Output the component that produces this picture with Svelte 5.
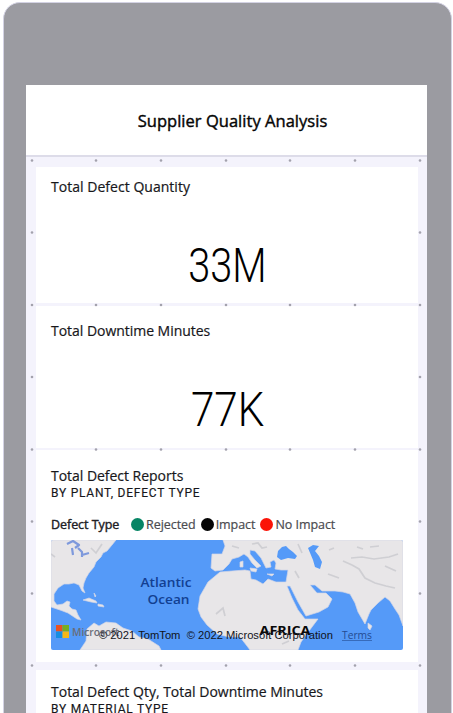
<script>
  const columns = [6, 70, 135, 200, 264, 329, 394];
  const rows = [5, 77, 149.5, 221.5, 294, 366, 438, 510];
  const dots = [];
  rows.forEach((y, r) => {
    columns.forEach((x, c) => {
      const edge = c === 0 || c === columns.length - 1;
      const gutter = r === 0 || r === 2 || r === 4 || r === 7;
      if (edge || gutter) dots.push({ x, y });
    });
  });
  const legend = [
    { label: 'Rejected', color: '#078565', gap: '5px' },
    { label: 'Impact', color: '#050505', gap: '5px' },
    { label: 'No Impact', color: '#fb1408', gap: '0' }
  ];
</script>

<div class="stage">
  <div class="phone">
    <div class="screen">
      <header><span class="title">Supplier Quality Analysis</span></header>
      <main>
        <section class="card first">
          <h2 class="t1">Total Defect Quantity</h2>
          <div class="value"><span class="v1">33M</span></div>
        </section>
        <section class="card second">
          <h2 class="t2">Total Downtime Minutes</h2>
          <div class="value"><span class="v2">77K</span></div>
        </section>
        <section class="card third">
          <h2 class="t3">Total Defect Reports</h2>
          <div class="sub">BY PLANT, DEFECT TYPE</div>
          <div class="legend">
            <b>Defect Type</b>
            {#each legend as item}
              <span class="item" style:margin-right={item.gap}>
                <i style:background={item.color}></i>{item.label}
              </span>
            {/each}
          </div>
          <svg class="map" viewBox="0 0 352 110" width="352" height="110">
            <rect width="352" height="110" fill="#559af8" />
            <g fill="#e8e6e8" stroke="#d3d6e6" stroke-width="0.7" stroke-linejoin="round">
              <path d="M0 0H65L61 5L56 11L52 13L50 17L45 22L43 27L38 33L35 38L33 43L32 48L34 53L31 51L28 45L23 43L18 44L13 44L7 48L3 54L3 61L6 65L12 64L16 61L19 62L18 66L21 69L25 70L27 75L30 80L26 79L17 73L9 70L0 67Z" />
              <path d="M32 60L38 58L45 61L46 63L40 62ZM47 64L52 65L53 67L47 66ZM43 53L45 56L44 57Z" />
              <path d="M29 110L35 101L36 89L43 83L48 86L55 82L65 83L72 88L81 91L88 97L97 99L108 106L110 110Z" />
              <path d="M172 0L174 6L171 14H161L160 28L164 31L172 30L178 24L181 19L188 17L193 14L197 17L201 23L206 28L210 26L204 20L199 14L199 10L204 11L210 18L215 28L220 27L219 22L223 20L225 23L224 29L230 30L237 30L235 42L225 42L217 39L212 44L205 40L200 39L199 31L194 30L181 31L169 32L163 37L157 42L149 56L147 69L150 77L156 85L166 94L178 97L189 97L196 106L199 110H247L250 102L258 91L267 79L254 79L247 70L241 58L236 46L239 46L247 62L255 76L268 72L277 67L281 59L275 53L266 53L259 45L264 45L271 51L284 51L292 52L299 54L304 63L307 72L314 84L318 74L320 70L327 63L334 57L339 61L344 69L348 75L352 86V0Z" />
              <path d="M317 83L321 86L319 90L317 88Z" />
              <path d="M199 28L206 29L205 32L200 31ZM216 34L223 34L221 36ZM189 22L192 21L192 27L189 27Z" />
            </g>
            <g fill="#559af8">
              <path d="M226 17L227 11L231 7L235 6L238 9L242 12L246 16L244 19L237 18L230 20Z" />
              <path d="M257 8L262 5L268 6L264 11L268 16L271 22L269 29L264 27L262 20Z" />
            </g>
            <g fill="none" stroke="#7e99dc" stroke-width="2.2" stroke-linejoin="round">
              <path d="M16 4L22 1L28 5L24 8M21 8L22 15M27 8L31 12L31 17M31 15L38 13" />
            </g>
            <g fill="none" stroke="#c4c4cb" stroke-width="1.7" opacity=".7">
              <path d="M292 21L301 25L308 29L314 38L324 43L335 46L344 48M300 18L311 17L323 19L338 17L347 14M278 10L283 8M306 7L312 9M319 7L328 6M201 4L207 3L211 8L216 7M0 14L4 17M40 8L45 13L51 4M165 74L172 68L174 76M244 31L248 38M181 6L188 8M222 90L230 91M231 104L238 101M334 26L345 31M277 34L288 38M247 4L251 13" />
            </g>
            <g class="ocean">
              <text x="89.5" y="46.5" textLength="51" lengthAdjust="spacingAndGlyphs">Atlantic</text>
              <text x="96.5" y="63.5" textLength="42" lengthAdjust="spacingAndGlyphs">Ocean</text>
            </g>
            <rect x="5" y="85" width="6.5" height="6.5" fill="#e85122" />
            <rect x="11.5" y="85" width="6.5" height="6.5" fill="#75af22" />
            <rect x="5" y="91.5" width="6.5" height="6.5" fill="#168de2" />
            <rect x="11.5" y="91.5" width="6.5" height="6.5" fill="#f4b717" />
            <text class="brand" x="21" y="96" textLength="47" lengthAdjust="spacingAndGlyphs">Microsoft</text>
            <text class="africa" x="208.5" y="95" textLength="51" lengthAdjust="spacingAndGlyphs">AFRICA</text>
            <text class="credit" x="48" y="99" textLength="234" lengthAdjust="spacingAndGlyphs" xml:space="preserve">© 2021 TomTom  © 2022 Microsoft Corporation</text>
            <text class="terms" x="291" y="99" textLength="30" lengthAdjust="spacingAndGlyphs">Terms</text>
            <path d="M291 100.5H321" stroke="#244b91" stroke-width=".6" />
          </svg>
        </section>
        <section class="card fourth">
          <h2 class="t4">Total Defect Qty, Total Downtime Minutes</h2>
          <div class="sub">BY MATERIAL TYPE</div>
        </section>
        <svg class="dots" width="401" height="558" aria-hidden="true">
          {#each dots as dot}
            <circle cx={dot.x} cy={dot.y + 0.5} r="1.3" />
          {/each}
        </svg>
      </main>
    </div>
  </div>
</div>

<style>
  :global(body) { background: #fff; overflow: hidden; }
  .stage {
    box-sizing: border-box;
    width: 453px;
    height: 713px;
    padding: 2px 1px 0 3px;
    overflow: hidden;
    font-family: "Open Sans", "Noto Sans", sans-serif;
    color: #17171b;
  }
  .phone {
    box-sizing: border-box;
    width: 449px;
    height: 740px;
    padding: 82px 0 0 22px;
    border: 1px solid #d3d2e3;
    border-radius: 17px 17px 0 0;
    background: #9b9ba1;
  }
  .screen { width: 401px; height: 640px; background: #fff; }
  header {
    height: 70px;
    display: flex;
    align-items: center;
    justify-content: center;
    padding-left: 12px;
    box-sizing: border-box;
  }
  main {
    position: relative;
    height: 558px;
    box-sizing: border-box;
    padding: 10px 9px 0 10px;
    background: #f4f3fc;
    border-top: 2px solid #dddce9;
    display: flex;
    flex-direction: column;
  }
  .card {
    flex: none;
    box-sizing: border-box;
    padding: 0 0 0 15px;
    background: #fff;
  }
  .first { height: 136px; padding-top: 9px; margin-bottom: 3px; }
  .second { height: 142px; padding-top: 14px; margin-bottom: 2px; }
  .third { height: 212px; padding-top: 15px; margin-bottom: 8px; }
  .fourth { height: 60px; padding-top: 11px; }
  h2 {
    margin: 0;
    height: 21px;
    line-height: 21px;
    font-size: 14px;
    font-weight: 400;
    letter-spacing: -.03px;
    white-space: nowrap;
    -webkit-text-stroke: .2px #17171b;
  }
  .title {
    font-size: 16.5px;
    color: #050505;
    letter-spacing: .03px;
    white-space: nowrap;
    -webkit-text-stroke: .4px #050505;
  }
  .t1 { letter-spacing: .03px; }
  .t4 { letter-spacing: 0; }
  .value {
    height: 70px;
    margin-top: 34px;
    padding-right: 14px;
    display: flex;
    justify-content: center;
    line-height: 70px;
    font-family: Roboto, sans-serif;
    font-size: 49px;
    font-weight: 300;
    color: #000;
  }
  .value span { display: inline-block; transform: scaleX(.81); }
  .value .v2 { transform: scaleX(.86); }
  .sub {
    height: 14px;
    line-height: 15px;
    font-family: Roboto, sans-serif;
    font-size: 12px;
    letter-spacing: .77px;
    white-space: nowrap;
    -webkit-text-stroke: .15px #17171b;
  }
  .legend {
    display: flex;
    align-items: center;
    height: 18px;
    margin-top: 15px;
    margin-bottom: 7px;
    font-size: 12.5px;
    letter-spacing: -.05px;
    white-space: nowrap;
    color: #4b4b50;
    -webkit-text-stroke: .2px #4b4b50;
  }
  .legend b { width: 80px; font-weight: 400; color: #202024; -webkit-text-stroke: .4px #202024; }
  .item { display: flex; align-items: center; }
  .item i { width: 13px; height: 13px; margin-right: 2px; border-radius: 50%; flex: none; }
  .map { display: block; border-radius: 2px; }
  .map text { font-family: "Open Sans", "Noto Sans", sans-serif; }
  .ocean text { font-size: 12.5px; font-weight: 600; fill: #123f91; }
  .map .brand { font-size: 11px; font-weight: 600; fill: #6a6d78; }
  .map .africa { font-size: 13px; font-weight: 700; fill: #090909; }
  .map .credit { font-family: "Liberation Sans", sans-serif; font-size: 11.5px; fill: #10131a; }
  .map .terms { font-size: 11.5px; fill: #244b91; }
  .dots { position: absolute; left: 0; top: -2px; pointer-events: none; }
  .dots circle { fill: #a3a2ad; }
</style>
